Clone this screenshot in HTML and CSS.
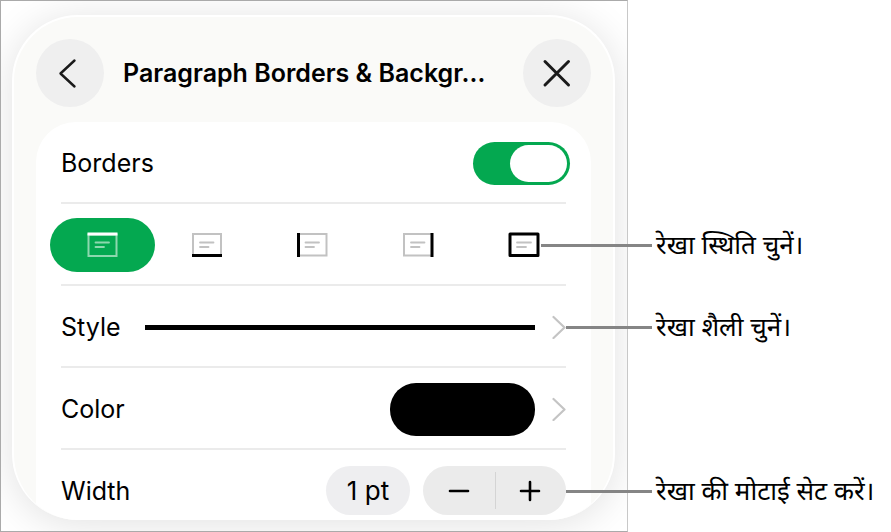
FILE: index.html
```html
<!DOCTYPE html>
<html lang="hi">
<head>
<meta charset="utf-8">
<meta name="viewport" content="width=device-width, initial-scale=1">
<title>Paragraph Borders &amp; Background</title>
<link rel="stylesheet" href="styles.css">
</head>
<body>
<main class="figure">
  <div class="frame" lang="en">
    <section class="sheet">
      <header class="bar">
        <button class="round" type="button" aria-label="Back">
          <svg width="68" height="68" viewBox="0 0 68 68"><path d="M38.500 21.500 24.500 34.500 38.500 47.500"/></svg>
        </button>
        <h1 class="title">Paragraph Borders &amp; Backgr…</h1>
        <button class="round close" type="button" aria-label="Close">
          <svg width="68" height="68" viewBox="0 0 68 68"><path d="M22 22.500 45.500 46M45.500 22.500 22 46"/></svg>
        </button>
      </header>
      <div class="card">
        <div class="row">
          <label for="borders">Borders</label>
          <input class="switch" id="borders" type="checkbox" role="switch" checked>
        </div>
        <div class="row picker" role="group" aria-label="Border position">
          <button class="option selected" type="button" aria-label="Top" aria-pressed="true">
            <svg width="32" height="26" viewBox="0 0 32 26"><path class="thin" d="M1.500 2.500H29.500V24H1.500Z"/><path class="lines" d="M8.500 10.500H22M8.500 15H17"/><path class="edge" d="M.5 2H30.500"/></svg>
          </button>
          <button class="option" type="button" aria-label="Bottom">
            <svg width="32" height="26" viewBox="0 0 32 26"><path class="thin" d="M1 2H29V23.500H1Z"/><path class="lines" d="M8 10.500H21.500M8 15H16.500"/><path class="edge" d="M0 23.500H30"/></svg>
          </button>
          <button class="option" type="button" aria-label="Left">
            <svg width="32" height="26" viewBox="0 0 32 26"><path class="thin" d="M1.500 2H29.500V23.500H1.500Z"/><path class="lines" d="M8.500 10.500H22M8.500 15H17"/><path class="edge" d="M1.500 1V25"/></svg>
          </button>
          <button class="option" type="button" aria-label="Right">
            <svg width="32" height="26" viewBox="0 0 32 26"><path class="thin" d="M1 2H29V23.500H1Z"/><path class="lines" d="M8 10.500H21.500M8 15H16.500"/><path class="edge" d="M29 1V25"/></svg>
          </button>
          <button class="option" type="button" aria-label="All sides">
            <svg width="32" height="26" viewBox="0 0 32 26"><path class="lines" d="M9 10.500H23M9 15H18"/><path class="edge" d="M2 2H30V23.500H2Z"/></svg>
          </button>
        </div>
        <div class="row">
          <span>Style</span>
          <span class="stroke"></span>
          <svg class="chevron" width="14" height="24" viewBox="0 0 14 24"><path d="M1.500 2 12.500 12.500 1.500 23"/></svg>
        </div>
        <div class="row">
          <span>Color</span>
          <span class="swatch"></span>
          <svg class="chevron" width="14" height="24" viewBox="0 0 14 24"><path d="M1.500 2 12.500 12.500 1.500 23"/></svg>
        </div>
        <div class="row last">
          <span>Width</span>
          <button class="value" type="button">1 pt</button>
          <div class="stepper">
            <button type="button" aria-label="Decrease"><svg width="22" height="22" viewBox="0 0 22 22"><path d="M2 11H20"/></svg></button>
            <button type="button" aria-label="Increase"><svg width="22" height="22" viewBox="0 0 22 22"><path d="M2 11H20M11 2V20"/></svg></button>
          </div>
        </div>
      </div>
    </section>
  </div>
  <ul class="callouts">
    <li class="callout position"><span class="leader"></span><span class="note">रेखा स्थिति चुनें।</span></li>
    <li class="callout style"><span class="leader"></span><span class="note">रेखा शैली चुनें।</span></li>
    <li class="callout width"><span class="leader"></span><span class="note">रेखा की मोटाई सेट करें।</span></li>
  </ul>
</main>
</body>
</html>
```
FILE: styles.css
```css
* { box-sizing: border-box; }

body {
  margin: 0;
  background: #fff;
  color: #000;
  font: 25px/32px Inter, "Liberation Sans", sans-serif;
}

button {
  margin: 0;
  padding: 0;
  border: 0;
  background: none;
  color: inherit;
  font: inherit;
}

svg {
  display: block;
  flex: none;
  fill: none;
}

.figure {
  display: grid;
  grid-template-columns: minmax(0, 1fr) 263px;
}

.frame {
  padding: 14px 12px 11px 11px;
  border: 1px solid #aaa;
  border-right-color: #c8c8c8;
  overflow: hidden;
}

.sheet {
  padding: 0 22px;
  border: 2px solid #fff;
  border-bottom-width: 0;
  border-radius: 66px;
  background: #fafaf8;
  box-shadow: 0 4px 40px rgba(0, 0, 0, 0.12);
  overflow: hidden;
}

.bar {
  display: flex;
  align-items: center;
  gap: 19px;
  padding: 22px 0 15px;
}

.round {
  flex: none;
  width: 68px;
  height: 68px;
  border-radius: 50%;
  background: #efefef;
}

.round path {
  stroke: #1a1a1a;
  stroke-width: 2.4;
  stroke-linecap: round;
  stroke-linejoin: round;
}

.close path { stroke-width: 3; }

.title {
  flex: 1;
  min-width: 0;
  margin: 0;
  font-size: 25px;
  font-weight: 600;
  white-space: nowrap;
}

.card {
  padding: 0 25px;
  border-radius: 40px 40px 0 0;
  background: #fff;
}

.row {
  display: flex;
  align-items: center;
  min-height: 82px;
  padding-top: 2px;
  border-bottom: 2px solid #ebebeb;
}

.switch {
  appearance: none;
  display: flex;
  justify-content: flex-end;
  width: 97px;
  height: 43px;
  margin: 0 -4px 0 auto;
  padding: 3px;
  border-radius: 22px;
  background: #04a850;
}

.switch::before {
  content: "";
  width: 57px;
  border-radius: 19px;
  background: #fff;
}

.picker {
  display: grid;
  grid-template-columns: repeat(5, 1fr);
  position: relative;
  margin: 0 -11px;
  padding: 0;
  border-bottom: 0;
}

.picker::after {
  content: "";
  position: absolute;
  inset: auto 11px 0;
  height: 2px;
  background: #ebebeb;
}

.option {
  display: grid;
  place-items: center;
  height: 54px;
  border-radius: 27px;
}

.selected { background: #04a850; }

.thin {
  stroke: #c2c2c2;
  stroke-width: 2;
}

.lines {
  stroke: #c2c2c2;
  stroke-width: 1.8;
  stroke-linecap: round;
}

.edge {
  stroke: #000;
  stroke-width: 3;
  stroke-linejoin: round;
}

.selected .thin,
.selected .lines { stroke: #8dd8ae; }
.selected .edge { stroke: #fff; }

.stroke {
  flex: 1;
  height: 5px;
  margin-left: 24px;
  background: #000;
}

.chevron { margin-left: 17px; }

.chevron path {
  stroke: #c4c4c4;
  stroke-width: 2.2;
  stroke-linecap: round;
  stroke-linejoin: round;
}

.swatch {
  width: 145px;
  height: 53px;
  margin-left: auto;
  border-radius: 26px;
  background: #000;
}

.last {
  min-height: 0;
  padding: 16px 0 5px;
  border-bottom: 0;
}

.value {
  width: 84px;
  height: 49px;
  margin-left: auto;
  border-radius: 25px;
  background: #eeeef0;
  font-size: 26px;
}

.stepper {
  display: grid;
  grid-template-columns: 1fr 1fr;
  position: relative;
  width: 143px;
  height: 49px;
  margin-left: 13px;
  border-radius: 25px;
  background: #ebebeb;
}

.stepper::after {
  content: "";
  position: absolute;
  inset: 6px auto 6px 50%;
  width: 1px;
  background: #d4d4d4;
}

.stepper button {
  display: grid;
  place-items: center;
}

.stepper path {
  stroke: #000;
  stroke-width: 2.6;
  stroke-linecap: round;
}

.callouts {
  display: grid;
  grid-template-rows: 204px 82px 82px 82px 82px;
  z-index: 1;
  margin: 0 0 0 -87px;
  padding: 0;
  list-style: none;
  font: 26px/32px "Noto Sans Devanagari", "Noto Sans", sans-serif;
}

.callout {
  display: flex;
  align-items: center;
  gap: 4px;
  white-space: nowrap;
}

.position { grid-row: 2; }
.style { grid-row: 3; }
.width { grid-row: 5; }

.note { padding-top: 6px; }

.leader {
  width: 86px;
  height: 3px;
  margin-left: 25px;
  background: #858585;
}

.position .leader {
  width: 111px;
  margin-left: 0;
}
```
